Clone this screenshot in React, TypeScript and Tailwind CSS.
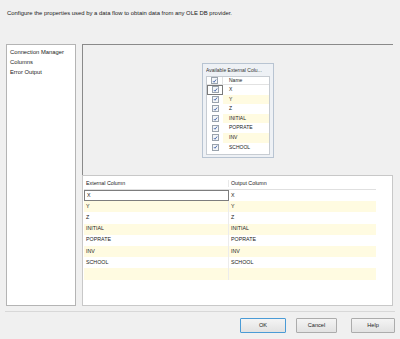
import React from "react";

const cols = ["X", "Y", "Z", "INITIAL", "POPRATE", "INV", "SCHOOL"];

function Check() {
  return (
    <span className="flex h-[7px] w-[7px] items-center justify-center border border-[#9aa3ad] bg-[#f4f6f8]">
      <svg viewBox="0 0 8 8" className="h-[6px] w-[6px]">
        <path d="M1.5 4.2 L3.2 6 L6.6 1.6" fill="none" stroke="#2b4f9e" strokeWidth="1.3" />
      </svg>
    </span>
  );
}

function Button({ label, primary }: { label: string; primary?: boolean }) {
  return (
    <div
      className={
        "flex h-[15px] items-center justify-center rounded-[1px] border bg-gradient-to-b from-[#f4f4f4] to-[#e2e2e2] text-[5.6px] text-[#222] " +
        (primary ? "border-[#4a9bd6]" : "border-[#acacac]")
      }
    >
      {label}
    </div>
  );
}

export default function App() {
  return (
    <div
      className="flex h-[339px] w-[400px] flex-col overflow-hidden bg-[#f0f0f0] text-[#222]"
      style={{ fontFamily: '"Liberation Sans", Arial, sans-serif' }}
    >
      {/* Header */}
      <div className="h-[44px] pl-[7px] pt-[10px] text-[5.9px] leading-[7px]">
        Configure the properties used by a data flow to obtain data from any OLE DB provider.
      </div>

      {/* Main area */}
      <div className="flex h-[262px] pl-[6px] pr-[7px]">
        {/* Left nav */}
        <div className="w-[70px] border border-[#b4b4b4] bg-white pl-[3px] pt-[2px] text-[5.8px] leading-[10px]">
          <div>Connection Manager</div>
          <div>Columns</div>
          <div>Error Output</div>
        </div>

        {/* Right panel */}
        <div className="ml-[6px] flex flex-1 flex-col">
          {/* Canvas */}
          <div className="flex h-[131px] justify-center border-l border-t border-[#8a8a8a] bg-[#f0f0f0] pt-[18px]">
            <div className="h-[95px] w-[72px] border border-[#b8c4d2] bg-[#eef1f5] px-[3px]">
              <div className="h-[12px] truncate pt-[3px] text-[5px] leading-[6px] text-[#333]">
                Available External Colu...
              </div>
              <div className="h-[79px] border border-[#c7ccd2] bg-white">
                <div className="flex h-[8px] items-center border-b border-[#e2e2e2] text-[5px]">
                  <div className="flex w-[16px] items-center justify-center border-r border-[#e2e2e2]">
                    <Check />
                  </div>
                  <div className="pl-[6px]">Name</div>
                </div>
                {cols.map((c, i) => (
                  <div key={c} className="flex h-[9.6px] items-center text-[5px]">
                    <div
                      className={
                        "flex h-full w-[16px] items-center justify-center " +
                        (i === 0 ? "border border-[#7a7a7a]" : "")
                      }
                    >
                      <Check />
                    </div>
                    <div
                      className={
                        "flex h-full flex-1 items-center pl-[6px] " + (i % 2 === 1 ? "bg-[#fffbe1]" : "")
                      }
                    >
                      {c}
                    </div>
                  </div>
                ))}
              </div>
            </div>
          </div>

          {/* Grid */}
          <div className="flex flex-1 flex-col border border-[#c8c8c8] bg-white pl-[1px] pt-[2px] text-[5.3px]">
            <div className="flex h-[12px] w-[292px] items-center border-b border-[#e0e0e0]">
              <div className="w-[145px] border-r border-[#e8e8e8] pl-[2px]">External Column</div>
              <div className="pl-[2px]">Output Column</div>
            </div>
            {[...cols, ""].map((c, i) => (
              <div
                key={i}
                className={"flex h-[11.2px] w-[292px] items-center " + (i % 2 === 1 ? "bg-[#fffbe1]" : "")}
              >
                <div
                  className={
                    "flex h-full w-[145px] items-center pl-[2px] " +
                    (i === 0 ? "border border-[#7d7d7d]" : "border-r border-[#ececec]")
                  }
                >
                  {c}
                </div>
                <div className="pl-[2px]">{c}</div>
              </div>
            ))}
          </div>
        </div>
      </div>

      {/* Separator */}
      <div className="mx-[5px] mt-[5px] h-[1px] bg-[#d8d8d8]" />

      {/* Buttons */}
      <div className="flex justify-end pr-[5px] pt-[6px]">
        <div className="w-[46px]">
          <Button label="OK" primary />
        </div>
        <div className="ml-[10px] w-[41px]">
          <Button label="Cancel" />
        </div>
        <div className="ml-[14px] w-[44px]">
          <Button label="Help" />
        </div>
      </div>
    </div>
  );
}
